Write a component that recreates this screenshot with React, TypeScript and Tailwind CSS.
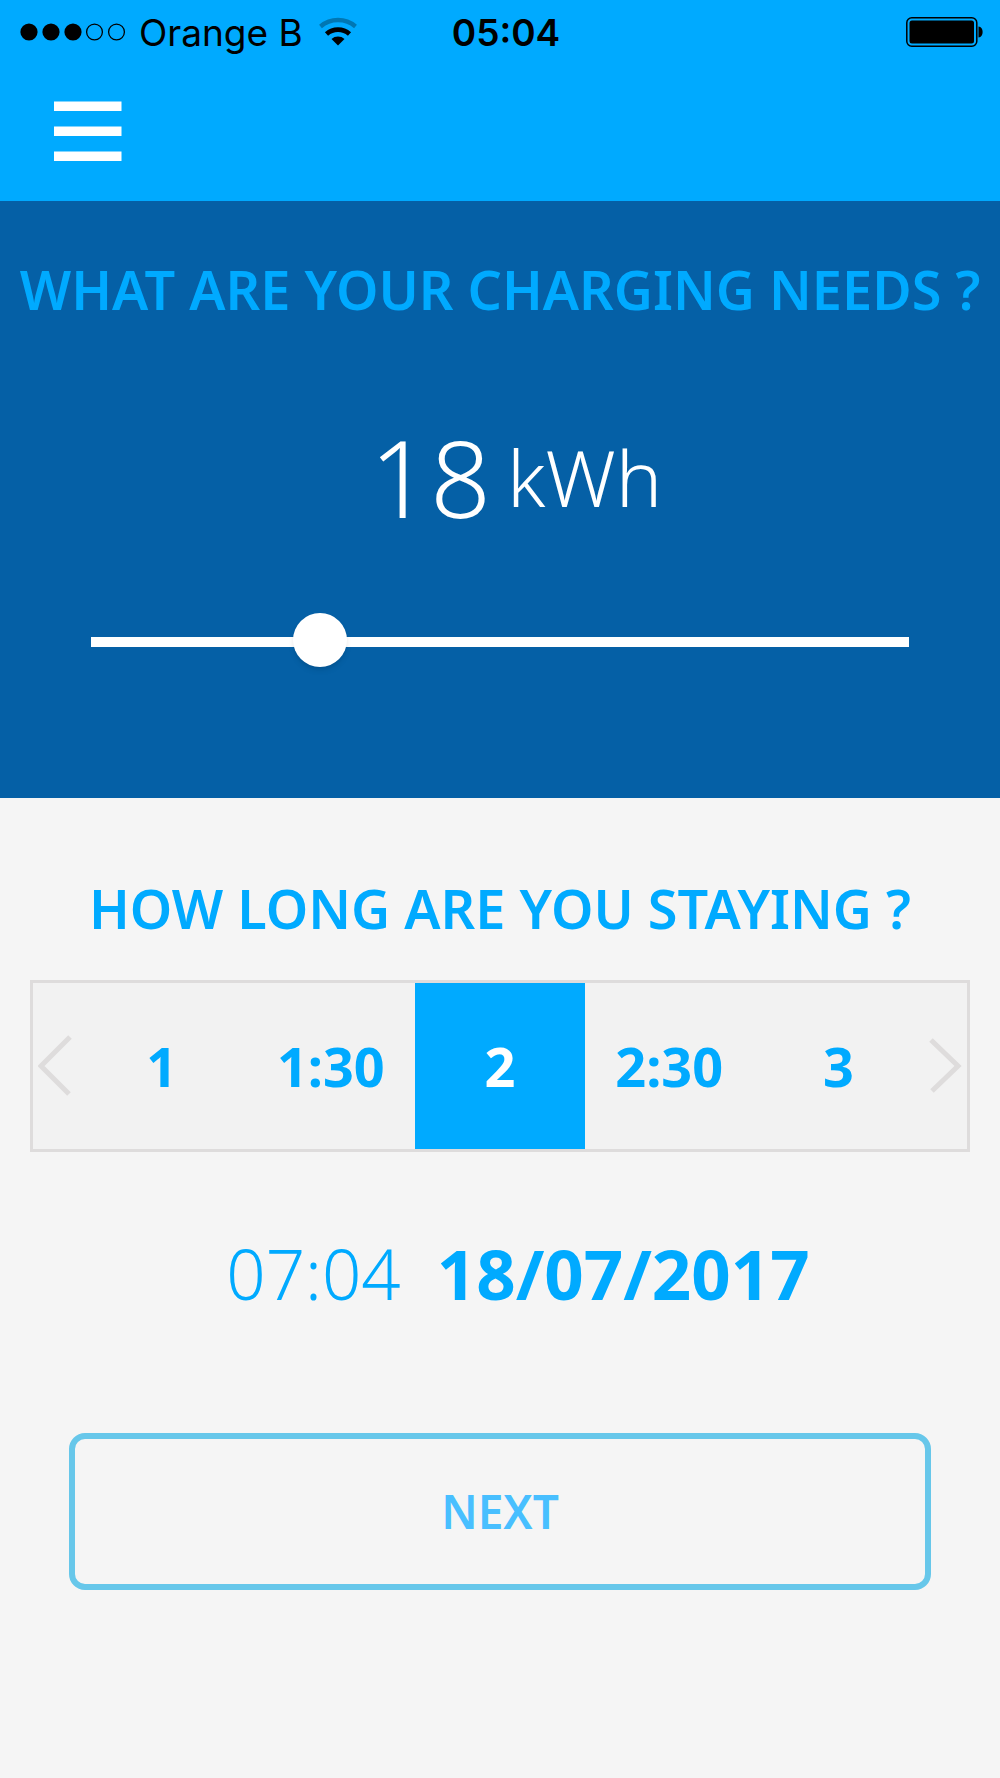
import { useState } from "react";

const durations = ["1", "1:30", "2", "2:30", "3"];

function StatusBar() {
  return (
    <div className="grid h-16 grid-cols-[1fr_auto_1fr] items-center pl-5 pr-4 font-['Inter',sans-serif] text-[37px] leading-none text-black">
      <div className="flex items-center gap-3">
        <svg width="107" height="18" viewBox="0 0 107 18" aria-hidden="true">
          <circle cx="9" cy="9" r="8.6" />
          <circle cx="31" cy="9" r="8.6" />
          <circle cx="53" cy="9" r="8.6" />
          <circle cx="74.5" cy="9" r="7.9" fill="none" stroke="black" strokeWidth="1.3" />
          <circle cx="96.5" cy="9" r="7.9" fill="none" stroke="black" strokeWidth="1.3" />
        </svg>
        <span>Orange B</span>
        <svg className="ml-1" width="38" height="30" viewBox="0 0 38 30" fill="none" aria-hidden="true">
          <path d="M1.5 9.5 A27 27 0 0 1 36.5 9.5" stroke="#0077b3" strokeWidth="4.4" />
          <path d="M7.5 17 A17.5 17.5 0 0 1 30.5 17" stroke="black" strokeWidth="4.8" />
          <path d="M12.5 22 A10 10 0 0 1 25.5 22 L19 28.5 Z" fill="black" />
        </svg>
      </div>
      <span className="pl-2 font-semibold">05:04</span>
      <svg className="justify-self-end" width="78" height="30" viewBox="0 0 78 30" aria-hidden="true">
        <rect x="0.8" y="0.8" width="70" height="28.4" rx="5" fill="none" stroke="black" strokeWidth="1.5" />
        <rect x="3.5" y="3.5" width="64.5" height="23" rx="2.5" />
        <path d="M72.5 9.5 C78 10 78 20 72.5 20.5 Z" />
      </svg>
    </div>
  );
}

export default function App() {
  const [energy, setEnergy] = useState(18);
  const [selected, setSelected] = useState(2);

  const step = (by: number) =>
    setSelected((i) => Math.min(durations.length - 1, Math.max(0, i + by)));

  return (
    <div className="min-h-screen bg-[#f5f5f5] font-['Noto_Sans',sans-serif] text-[#00aaff]">
      <header className="bg-[#00aaff] pb-10">
        <StatusBar />
        <button type="button" aria-label="Menu" className="ml-[54px] mt-[37px] block">
          <svg width="68" height="60" viewBox="0 0 68 60" fill="white">
            <rect y="0.5" width="67.5" height="9.5" />
            <rect y="25.5" width="67.5" height="9.5" />
            <rect y="50.5" width="67.5" height="9.5" />
          </svg>
        </button>
      </header>

      {/* Energy */}
      <section className="bg-[#0560a6] pb-[129px] pt-12">
        <h1 className="whitespace-nowrap text-center text-[54px] font-semibold leading-[80px]">
          WHAT ARE YOUR CHARGING NEEDS ?
        </h1>
        <p className="mt-[88px] flex items-center justify-center gap-4 pl-8 font-light leading-[120px] text-white">
          <span className="text-[106px]">{energy}</span>
          <span className="text-[78px]">kWh</span>
        </p>
        <div className="mt-[78px] px-[91px]">
          <input
            type="range"
            aria-label="Energy in kWh"
            min={0}
            max={68}
            value={energy}
            onChange={(e) => setEnergy(Number(e.target.value))}
            className="block h-[54px] w-full appearance-none bg-transparent [&::-webkit-slider-runnable-track]:h-[10px] [&::-webkit-slider-runnable-track]:bg-white [&::-webkit-slider-thumb]:-mt-6 [&::-webkit-slider-thumb]:size-[54px] [&::-webkit-slider-thumb]:appearance-none [&::-webkit-slider-thumb]:rounded-full [&::-webkit-slider-thumb]:bg-white [&::-webkit-slider-thumb]:shadow-md"
          />
        </div>
      </section>

      {/* Duration */}
      <section className="px-[30px] pt-[70px]">
        <h2 className="whitespace-nowrap text-center text-[54px] font-semibold leading-[80px]">
          HOW LONG ARE YOU STAYING ?
        </h2>
        <div className="mt-8 flex h-[172px] border-3 border-[#dedcdc] bg-[#f2f2f2]">
          <button type="button" aria-label="Shorter" onClick={() => step(-1)} className="flex w-11 items-center justify-center">
            <svg width="34" height="62" viewBox="0 0 34 62" fill="none" stroke="#dedcdc" strokeWidth="5">
              <path d="M32 2 L3 31 L31 59" />
            </svg>
          </button>
          {durations.map((d, i) => (
            <button
              key={d}
              type="button"
              aria-pressed={i === selected}
              onClick={() => setSelected(i)}
              className={
                i === selected
                  ? "flex-1 bg-[#00aaff] text-[54px] font-bold leading-none text-white"
                  : "flex-1 text-[54px] font-bold leading-none"
              }
            >
              {d}
            </button>
          ))}
          <button type="button" aria-label="Longer" onClick={() => step(1)} className="flex w-11 items-center justify-center">
            <svg width="34" height="62" viewBox="0 0 34 62" fill="none" stroke="#dedcdc" strokeWidth="5">
              <path d="M3 5 L30 31 L4 56" />
            </svg>
          </button>
        </div>
      </section>

      <p className="mt-[71px] flex justify-center gap-9 pl-9 text-[69px] leading-[100px]">
        <span className="font-light">07:04</span>
        <span className="font-bold">18/07/2017</span>
      </p>

      <div className="px-[69px] pt-[110px]">
        <button
          type="button"
          className="h-[157px] w-full rounded-2xl border-6 border-[#67c7ea] text-[46px] font-semibold text-[#48bfff]"
        >
          NEXT
        </button>
      </div>
    </div>
  );
}
